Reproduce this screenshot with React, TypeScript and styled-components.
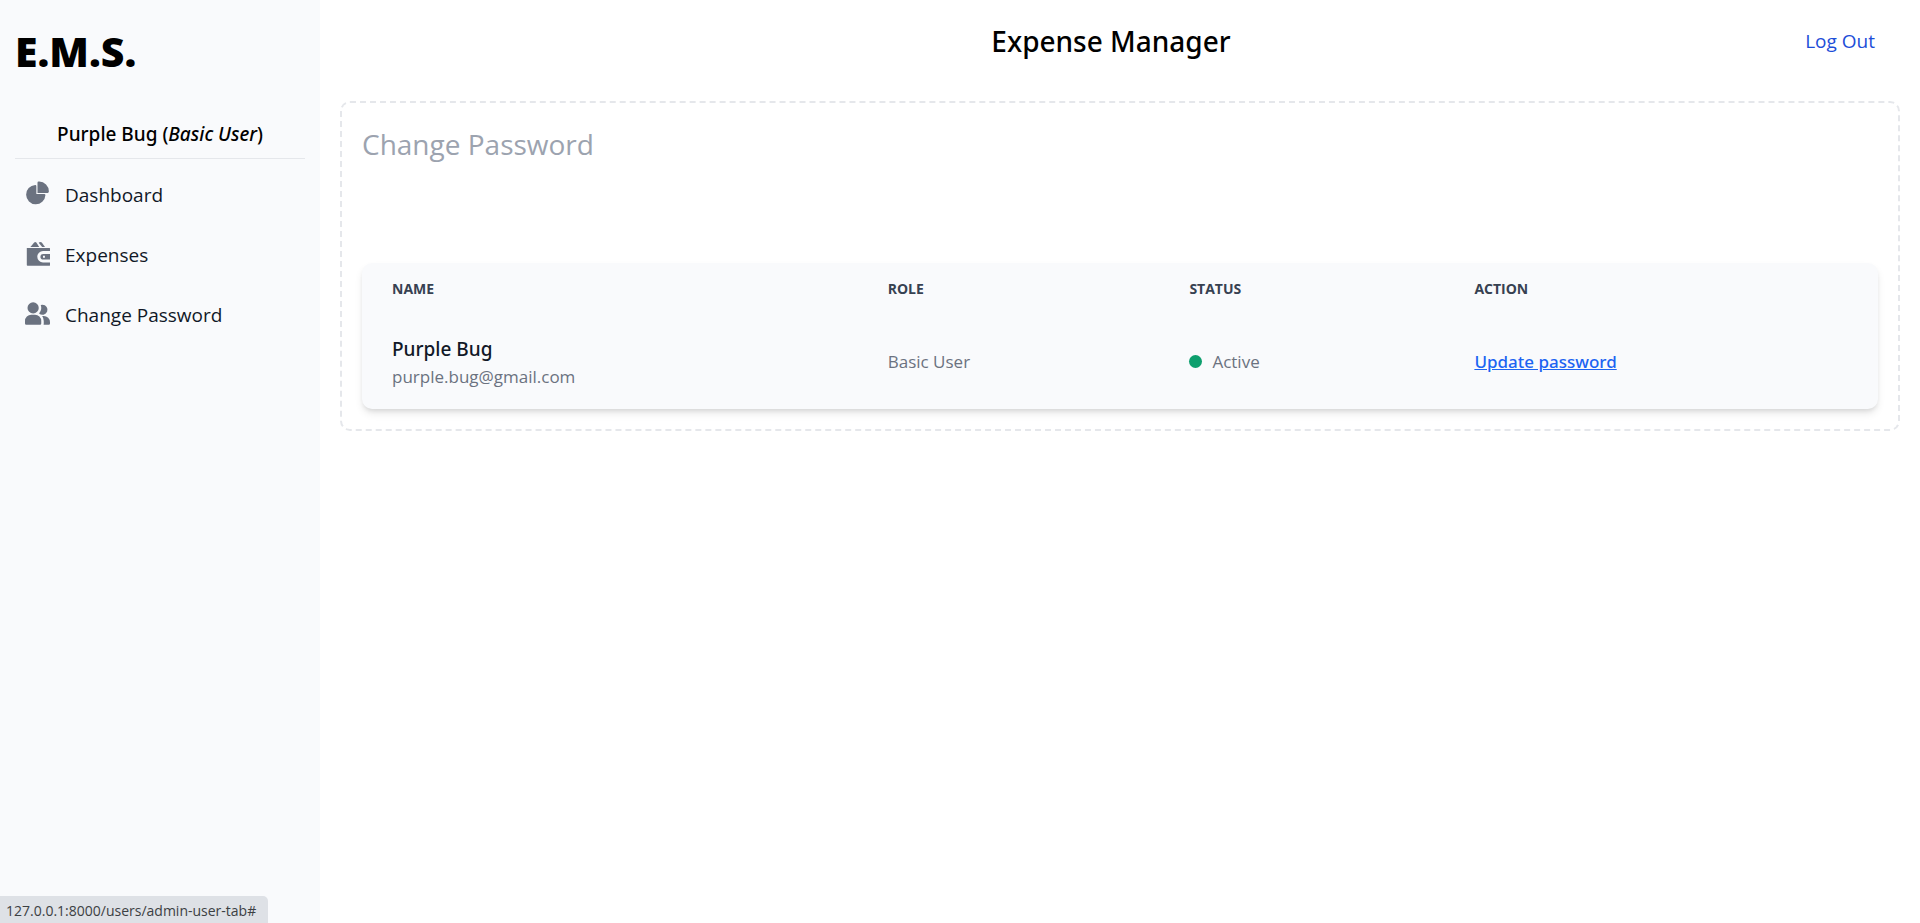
import React from 'react';
import styled, { createGlobalStyle } from 'styled-components';

const mediumFont = "'Segoe UI', 'Noto Sans', 'Open Sans', sans-serif";

const GlobalStyle = createGlobalStyle`
  *, *::before, *::after { box-sizing: border-box; }
  body {
    margin: 0;
    background: #fff;
    color: #000;
    font-family: 'Segoe UI', 'Open Sans', 'Noto Sans', sans-serif;
    font-size: 19px;
    line-height: 30px;
  }
`;

const Page = styled.div`
  display: flex;
  min-height: 100vh;
`;

const Sidebar = styled.aside`
  flex: 0 0 320px;
  padding: 27px 15px 0;
  background: #f9fafc;
`;

const Logo = styled.h1`
  margin: 0;
  font-family: ${mediumFont};
  font-size: 41px;
  font-weight: 900;
  line-height: 48px;
`;

const CurrentUser = styled.div`
  margin-top: 44px;
  padding-bottom: 9px;
  border-bottom: 1px solid #e5e7eb;
  font-family: ${mediumFont};
  font-size: 19px;
  font-weight: 500;
  text-align: center;
`;

const NavList = styled.ul`
  display: flex;
  flex-direction: column;
  gap: 10px;
  margin: 11px 0 0;
  padding: 0;
  list-style: none;
`;

const NavLink = styled.a`
  display: flex;
  align-items: center;
  gap: 15px;
  height: 50px;
  padding: 0 10px;
  color: #111827;
  text-decoration: none;
`;

const NavIcon = styled.svg`
  flex: none;
  width: 25px;
  height: 25px;
  margin-bottom: 4px;
  fill: #6b7280;
`;

const Content = styled.div`
  flex: 1;
  min-width: 0;
`;

const Header = styled.header`
  display: grid;
  grid-template-columns: 1fr auto 1fr;
  align-items: center;
  height: 81px;
  padding: 0 45px 0 27px;
`;

const Title = styled.h2`
  grid-column: 2;
  margin: 0;
  font-family: ${mediumFont};
  font-size: 28px;
  font-weight: 500;
  line-height: 40px;
`;

const LogOut = styled.a`
  justify-self: end;
  color: #1d4ed8;
  text-decoration: none;
`;

const Main = styled.main`
  padding: 20px;
`;

const Panel = styled.section`
  padding: 20px;
  border: 2px dashed #e5e7eb;
  border-radius: 10px;
`;

const PanelTitle = styled.h3`
  margin: 0 0 98px;
  color: #9ca3af;
  font-size: 28px;
  font-weight: 400;
  line-height: 42px;
`;

const TableCard = styled.div`
  overflow: hidden;
  border-radius: 10px;
  background: #f9fafc;
  box-shadow: 0 5px 8px -1px rgba(0, 0, 0, 0.1), 0 3px 5px -2px rgba(0, 0, 0, 0.1);
`;

const Table = styled.table`
  width: 100%;
  border-collapse: collapse;
  table-layout: fixed;
  color: #6b7280;
  font-size: 17px;
  line-height: 25px;
  text-align: left;
`;

const Column = styled.col<{ $width?: string }>`
  width: ${({ $width }) => $width ?? 'auto'};
`;

const HeadCell = styled.th`
  padding: 16px 30px 15px;
  color: #374151;
  font-size: 14px;
  font-weight: 700;
  line-height: 20px;
  text-transform: uppercase;
`;

const Cell = styled.td`
  padding: 20px 30px;
`;

const UserCell = styled.th`
  padding: 20px 30px;
  font-weight: 400;
`;

const UserName = styled.div`
  color: #111827;
  font-family: ${mediumFont};
  font-size: 19px;
  font-weight: 500;
  line-height: 30px;
`;

const Status = styled.div`
  display: flex;
  align-items: center;
  gap: 10px;
`;

const StatusDot = styled.span`
  width: 13px;
  height: 13px;
  border-radius: 50%;
  background: #0e9f6e;
`;

const ActionLink = styled.a`
  color: #1c64f2;
  font-family: ${mediumFont};
  font-weight: 500;
  text-decoration: underline;
`;

const LinkPreview = styled.div`
  position: fixed;
  bottom: 0;
  left: 0;
  padding: 3px 12px 0 6px;
  border-top-right-radius: 5px;
  background: #dee1e6;
  color: #3c4043;
  font-size: 14px;
  line-height: 24px;
`;

const PieIcon = () => (
  <NavIcon viewBox="0 0 22 21" aria-hidden="true">
    <path d="M16.975 11H10V4.025a1 1 0 0 0-1.066-.998 8.5 8.5 0 1 0 9.039 9.039.999.999 0 0 0-1-1.066h.002Z" />
    <path d="M12.5 0c-.157 0-.311.01-.565.027A1 1 0 0 0 11 1.02V10h8.975a1 1 0 0 0 1-.935c.013-.188.028-.374.028-.565A8.51 8.51 0 0 0 12.5 0Z" />
  </NavIcon>
);

const WalletIcon = () => (
  <NavIcon viewBox="0 0 25 25" aria-hidden="true">
    <path d="M5.4 6 9.2 1.6Q10.4.3 11.5 1.8L14.2 6Z" />
    <path d="M13.7 1.8Q15.2.2 16.8 1.6L20 6h-2.9Z" />
    <path d="M1.8 7H24.6Q25 7 25 7.5V10H18a5.7 5.7 0 0 0 0 11.4h7V24.2Q25 24.8 24.4 24.8H2.6Q1.8 24.8 1.8 24Z" />
    <path
      fillRule="evenodd"
      d="M18.2 12.9H25v5.6h-6.8a2.8 2.8 0 0 1 0-5.6ZM18 14.8v1.9h1.9v-1.9Z"
    />
  </NavIcon>
);

const UsersIcon = () => (
  <NavIcon viewBox="0 0 20 18" aria-hidden="true">
    <path d="M14 2a3.963 3.963 0 0 0-1.4.267 6.439 6.439 0 0 1-1.331 6.638A4 4 0 1 0 14 2Zm1 9h-1.264A6.957 6.957 0 0 1 15 15v2a2.97 2.97 0 0 1-.184 1H19a1 1 0 0 0 1-1v-1a5.006 5.006 0 0 0-5-5ZM6.5 9a4.5 4.5 0 1 0 0-9 4.5 4.5 0 0 0 0 9ZM8 10H5a5.006 5.006 0 0 0-5 5v2a1 1 0 0 0 1 1h11a1 1 0 0 0 1-1v-2a5.006 5.006 0 0 0-5-5Z" />
  </NavIcon>
);

const navItems = [
  { label: 'Dashboard', Icon: PieIcon },
  { label: 'Expenses', Icon: WalletIcon },
  { label: 'Change Password', Icon: UsersIcon },
];

export default function App() {
  return (
    <>
      <GlobalStyle />
      <Page>
        <Sidebar>
          <Logo>E.M.S.</Logo>
          <CurrentUser>
            Purple Bug (<em>Basic User</em>)
          </CurrentUser>
          <nav>
            <NavList>
              {navItems.map(({ label, Icon }) => (
                <li key={label}>
                  <NavLink href="#">
                    <Icon />
                    {label}
                  </NavLink>
                </li>
              ))}
            </NavList>
          </nav>
        </Sidebar>
        <Content>
          <Header>
            <Title>Expense Manager</Title>
            <LogOut href="#">Log Out</LogOut>
          </Header>
          <Main>
            <Panel>
              <PanelTitle>Change Password</PanelTitle>
              <TableCard>
                <Table>
                  <colgroup>
                    <Column $width="32.7%" />
                    <Column $width="19.9%" />
                    <Column $width="18.8%" />
                    <Column />
                  </colgroup>
                  <thead>
                    <tr>
                      <HeadCell scope="col">Name</HeadCell>
                      <HeadCell scope="col">Role</HeadCell>
                      <HeadCell scope="col">Status</HeadCell>
                      <HeadCell scope="col">Action</HeadCell>
                    </tr>
                  </thead>
                  <tbody>
                    <tr>
                      <UserCell scope="row">
                        <UserName>Purple Bug</UserName>
                        purple.bug@gmail.com
                      </UserCell>
                      <Cell>Basic User</Cell>
                      <Cell>
                        <Status>
                          <StatusDot />
                          Active
                        </Status>
                      </Cell>
                      <Cell>
                        <ActionLink href="#">Update password</ActionLink>
                      </Cell>
                    </tr>
                  </tbody>
                </Table>
              </TableCard>
            </Panel>
          </Main>
        </Content>
      </Page>
      <LinkPreview>127.0.0.1:8000/users/admin-user-tab#</LinkPreview>
    </>
  );
}
